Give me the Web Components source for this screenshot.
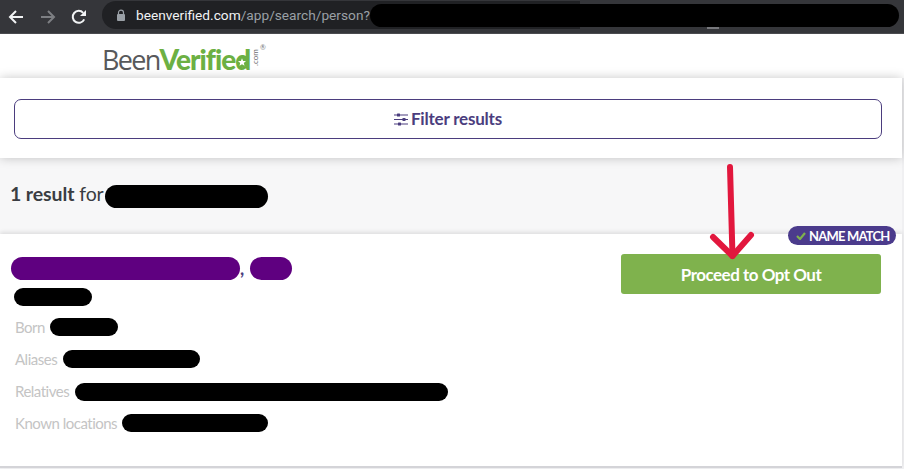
<!DOCTYPE html>
<html>
<head>
<meta charset="utf-8">
<style>
  html, body { margin: 0; padding: 0; }
  body { width: 904px; height: 469px; overflow: hidden; position: relative; background: #f0f0f2; font-family: Lato, "Liberation Sans", sans-serif; }
</style>
</head>
<body>
<browser-bar host="beenverified.com" rest="/app/search/person?"></browser-bar>
<site-logo></site-logo>
<filter-panel>Filter results</filter-panel>
<result-summary><b>1 result</b> for</result-summary>
<result-card></result-card>
<opt-arrow></opt-arrow>

<script>
// black or purple marker stroke over private data
class RedactPill extends HTMLElement {
  connectedCallback() {
    const shadow = this.attachShadow({ mode: 'open' });
    const w = this.getAttribute('w') || 60;
    const h = this.getAttribute('h') || 18;
    const color = this.getAttribute('color') || '#000';
    shadow.innerHTML = `<style>
      :host { display: block; flex: none; width: ${w}px; height: ${h}px; border-radius: ${h / 2}px; background: ${color}; }
    </style>`;
  }
}
customElements.define('redact-pill', RedactPill);

class BrowserBar extends HTMLElement {
  connectedCallback() {
    const shadow = this.attachShadow({ mode: 'open' });
    shadow.innerHTML = `<style>
      :host { display: flex; align-items: center; height: 34px; box-sizing: border-box; background: #35363a; border-bottom: 1px solid #4a4b4f; position: relative; }
      .nav { display: flex; align-items: center; width: 102px; flex: none; }
      .nav svg { display: block; flex: none; }
      .back { margin-left: 8px; }
      .fwd { margin-left: 16px; }
      .reload { margin-left: 15px; }
      .omni { width: 478px; height: 28px; box-sizing: border-box; margin-top: -3px; border-radius: 14px 0 0 14px; background: #202124; display: flex; align-items: center; padding-left: 14px; font: 13.7px Roboto, "Liberation Sans", sans-serif; white-space: nowrap; }
      .host { color: #f1f3f4; margin-left: 10px; }
      .rest { color: #9aa0a6; }
      .hide { position: absolute; left: 370px; top: 4px; }
      .tick { position: absolute; left: 707px; top: 27px; width: 12px; height: 2px; background: #77787c; }
    </style>
    <div class="nav">
      <svg class="back" width="16" height="16" viewBox="0 0 16 16" fill="none" stroke="#f1f3f4" stroke-width="2"><path d="M15 8H2M8 2 2 8l6 6"/></svg>
      <svg class="fwd" width="16" height="16" viewBox="0 0 16 16" fill="none" stroke="#7d7f83" stroke-width="2"><path d="M1 8h13M8 2l6 6-6 6"/></svg>
      <svg class="reload" width="16" height="16" viewBox="0 0 16 16" fill="none"><path d="M13.2 10.4A6 6 0 1 1 12.2 3.8" stroke="#f1f3f4" stroke-width="2"/><path d="M15 1v6H9z" fill="#f1f3f4"/></svg>
    </div>
    <div class="omni">
      <svg width="10" height="13" viewBox="0 0 10 13"><path d="M2.500 5V3.600a2.500 2.500 0 0 1 5 0V5" fill="none" stroke="#9aa0a6" stroke-width="1.200"/><rect x="1" y="5" width="8" height="7" rx="1" fill="#9aa0a6"/></svg>
      <span class="host">${this.getAttribute('host')}</span><span class="rest">${this.getAttribute('rest')}</span>
    </div>
    <redact-pill class="hide" w="529" h="23"></redact-pill>
    <div class="tick"></div>`;
  }
}
customElements.define('browser-bar', BrowserBar);

class SiteLogo extends HTMLElement {
  connectedCallback() {
    const shadow = this.attachShadow({ mode: 'open' });
    shadow.innerHTML = `<style>
      :host { display: flex; height: 44px; box-sizing: border-box; padding: 10px 0 0 102px; background: #fff; }
      .word { position: relative; display: flex; align-items: baseline; height: 28px; line-height: 30px; white-space: nowrap; }
      .been { color: #58595b; font-family: "Open Sans", Lato, sans-serif; font-weight: 400; font-size: 27px; letter-spacing: -1.700px; }
      .verified { color: #6cb043; font-weight: 900; font-size: 28px; letter-spacing: -1px; }
      .com { position: absolute; left: 149px; top: 22px; font-size: 8px; line-height: 8px; color: #6d6e70; transform: rotate(-90deg); transform-origin: left top; }
      .reg { position: absolute; left: 158px; top: 0; font-size: 7px; line-height: 7px; color: #77787a; }
      svg { position: absolute; left: 133px; top: 10px; }
    </style>
    <div class="word">
      <span class="been">Been</span><span class="verified">Verified</span>
      <svg width="14" height="15" viewBox="0 0 14 15"><circle cx="7" cy="8" r="5.500" fill="#6cb043"/><path d="M7 4.200l1.100 2.700 2.900.2-2.200 1.900.7 2.800L7 10.300l-2.500 1.500.7-2.800L3 7.100l2.900-.2z" fill="#fff"/></svg>
      <span class="com">.com</span><span class="reg">®</span>
    </div>`;
  }
}
customElements.define('site-logo', SiteLogo);

class FilterPanel extends HTMLElement {
  connectedCallback() {
    const shadow = this.attachShadow({ mode: 'open' });
    shadow.innerHTML = `<style>
      :host { display: block; position: relative; z-index: 1; width: 902px; height: 80px; box-sizing: border-box; padding: 21px 20px 0 14px; background: #fff; box-shadow: 0 0 10px rgba(0,0,0,.22); }
      .btn { height: 40px; box-sizing: border-box; border: 1px solid #4b3d7e; border-radius: 7px; display: flex; align-items: center; justify-content: center; gap: 3px; color: #4b3d7e; font-size: 17px; font-weight: 700; letter-spacing: -.2px; }
      span { margin-top: -1px; }
      svg { display: block; }
    </style>
    <div class="btn">
      <svg width="14" height="13" viewBox="0 0 14 13" fill="#4b3d7e"><path d="M0 1.500h14v1H0zM0 6h14v1H0zM0 10.500h14v1H0z"/><rect x="3" y="0.500" width="3" height="3" rx=".5"/><rect x="8.500" y="5" width="3" height="3" rx=".5"/><rect x="4" y="9.500" width="3" height="3" rx=".5"/></svg>
      <span><slot></slot></span>
    </div>`;
  }
}
customElements.define('filter-panel', FilterPanel);

class ResultSummary extends HTMLElement {
  connectedCallback() {
    const shadow = this.attachShadow({ mode: 'open' });
    shadow.innerHTML = `<style>
      :host { display: flex; align-items: center; width: 902px; height: 76px; box-sizing: border-box; padding: 0 0 6px 10px; background: #f7f7f8; color: #3a3d42; font-size: 19.500px; letter-spacing: -.1px; }
      .hide { margin: 6px 0 0 1px; }
    </style>
    <span><slot></slot></span><redact-pill class="hide" w="163" h="23"></redact-pill>`;
  }
}
customElements.define('result-summary', ResultSummary);

class InfoRow extends HTMLElement {
  connectedCallback() {
    const shadow = this.attachShadow({ mode: 'open' });
    shadow.innerHTML = `<style>
      :host { display: flex; align-items: center; gap: ${this.getAttribute('gap') || 5}px; height: 32px; color: #c4c4c4; font-size: 15px; letter-spacing: -.5px; white-space: nowrap; }
      redact-pill { margin-top: ${this.getAttribute('drop') || 0}px; }
    </style>
    <span>${this.getAttribute('label')}</span>
    <redact-pill w="${this.getAttribute('w')}"></redact-pill>`;
  }
}
customElements.define('info-row', InfoRow);

class ResultCard extends HTMLElement {
  connectedCallback() {
    const shadow = this.attachShadow({ mode: 'open' });
    shadow.innerHTML = `<style>
      :host { display: flex; justify-content: space-between; width: 902px; height: 234px; box-sizing: border-box; background: #fff; border-bottom: 2px solid #d4d4d8; position: relative; box-shadow: 0 -2px 4px rgba(0,0,0,.1); }
      .info { padding: 23px 0 0 15px; }
      .name { display: flex; align-items: flex-end; margin-left: -4px; color: #4b3d7e; font-size: 18px; font-weight: 700; line-height: 23px; }
      .comma { width: 10px; }
      .age { margin: 8px 0 5px -1px; }
      .side { padding: 20px 21px 0 0; position: relative; }
      .go { width: 260px; height: 40px; box-sizing: border-box; border-radius: 3px; background: #7fb24d; color: #fff; font-size: 17px; font-weight: 700; letter-spacing: -.5px; display: flex; align-items: center; justify-content: center; }
      .match { position: absolute; left: 167px; top: -8px; width: 108px; height: 19px; box-sizing: border-box; border-radius: 10px; background: #4b3b8c; color: #fff; font-size: 13px; font-weight: 700; letter-spacing: -.8px; display: flex; align-items: center; gap: 3px; padding-left: 8px; white-space: nowrap; }
      svg { display: block; flex: none; }
    </style>
    <div class="info">
      <div class="name">
        <redact-pill w="229" h="23" color="#5f0080"></redact-pill><span class="comma">,</span><redact-pill w="42" h="23" color="#5f0080"></redact-pill>
      </div>
      <redact-pill class="age" w="78"></redact-pill>
      <info-row label="Born" w="68" gap="5"></info-row>
      <info-row label="Aliases" w="137" gap="6"></info-row>
      <info-row label="Relatives" w="373" gap="6" drop="2"></info-row>
      <info-row label="Known locations" w="146"></info-row>
    </div>
    <div class="side">
      <div class="match">
        <svg width="10" height="8" viewBox="0 0 10 8" fill="none" stroke="#7fb24d" stroke-width="2.200"><path d="M1 4l3 3 5-6"/></svg>
        <span>NAME MATCH</span>
      </div>
      <div class="go">Proceed to Opt Out</div>
    </div>`;
  }
}
customElements.define('result-card', ResultCard);

// hand-drawn annotation lying over the page
class OptArrow extends HTMLElement {
  connectedCallback() {
    const shadow = this.attachShadow({ mode: 'open' });
    shadow.innerHTML = `<style>
      :host { display: block; position: absolute; left: 700px; top: 160px; z-index: 2; }
      svg { display: block; }
    </style>
    <svg width="64" height="104" viewBox="0 0 64 104" fill="none" stroke="#e2173d" stroke-width="6" stroke-linecap="round" stroke-linejoin="round">
      <path d="M30 7 32.500 96"/>
      <path d="M13 77 32.500 96 51 75"/>
    </svg>`;
  }
}
customElements.define('opt-arrow', OptArrow);
</script>
</body>
</html>
